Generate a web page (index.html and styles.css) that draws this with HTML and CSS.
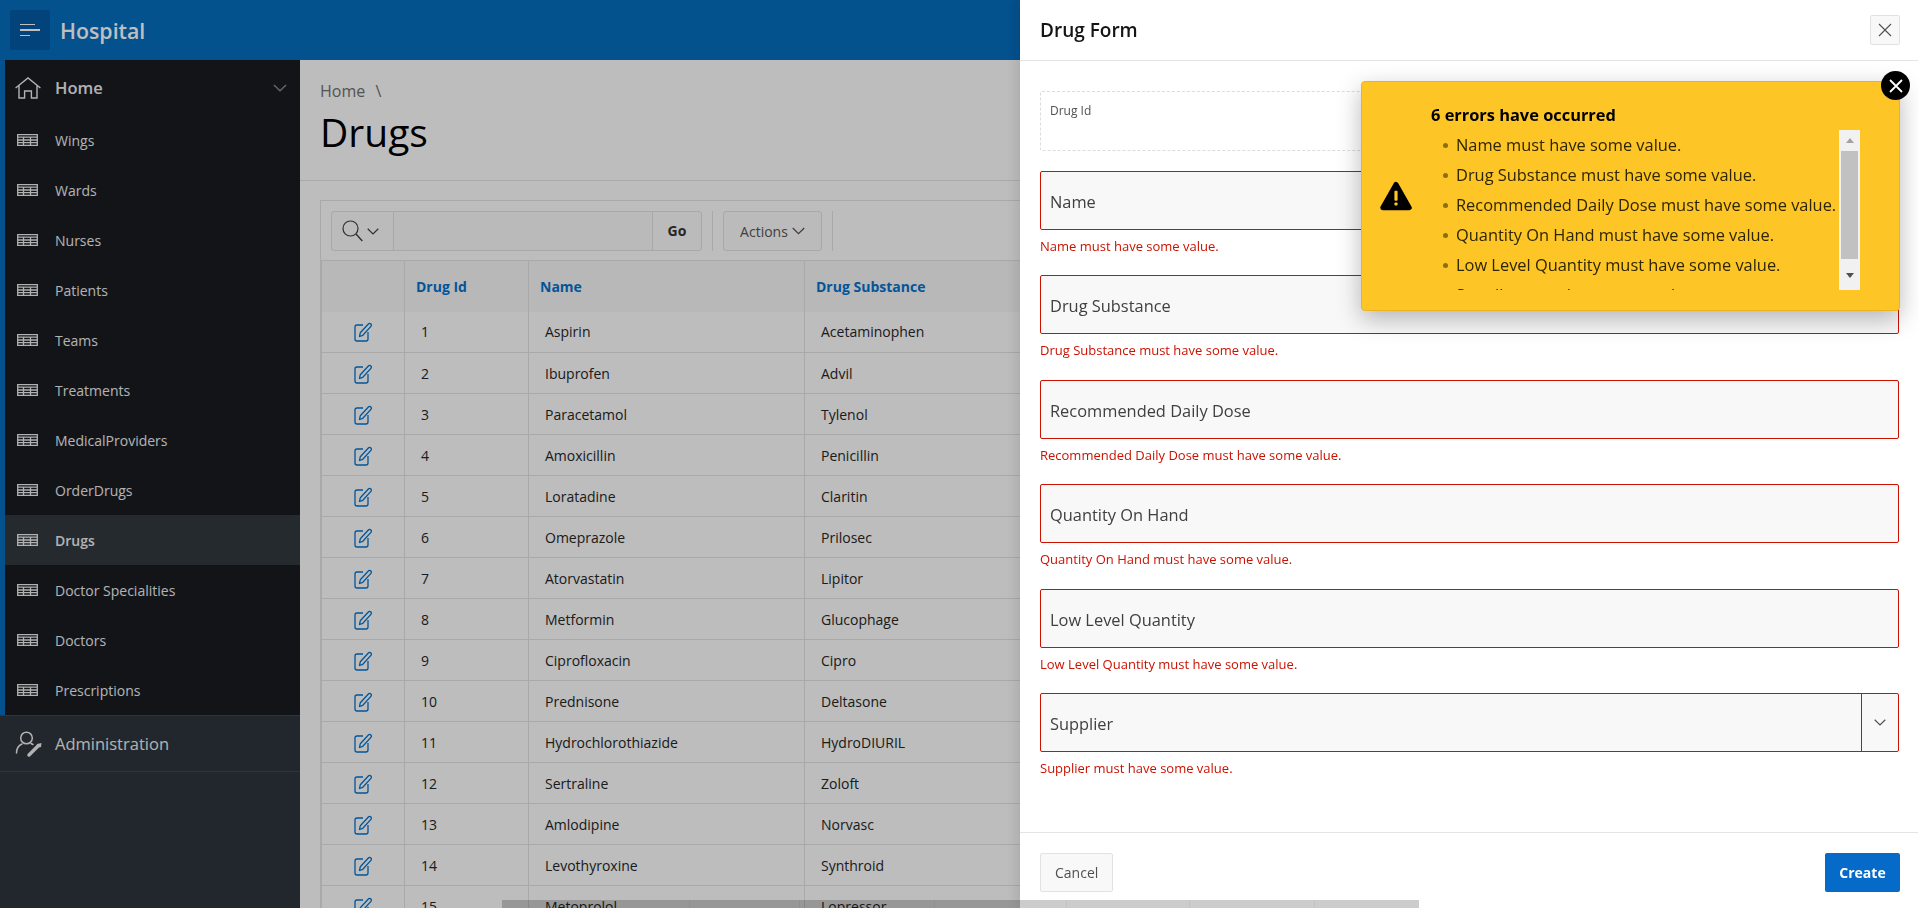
FILE: index.html

```html
<!DOCTYPE html>
<html lang="en">
<head>
    <meta charset="UTF-8">
    <meta name="viewport" content="width=device-width, initial-scale=1.0">
    <link rel="stylesheet" href="styles.css">
    <title>Drugs</title>
</head>
<body>
    <svg class="defs" width="0" height="0">
        <symbol id="i-table" viewBox="0 0 21 12">
            <path d="M.7.7h19.6v10.6H.7zM.7 3.2h19.6M.7 6h19.6M.7 8.7h19.6M6.5 3.2v8.1M13.5 3.2v8.1" fill="none" stroke="currentColor" stroke-width="1.3"/>
        </symbol>
        <symbol id="i-edit" viewBox="0 0 18 20">
            <path d="M9 3H3a2 2 0 0 0-2 2v12a2 2 0 0 0 2 2h9a2 2 0 0 0 2-2v-7" fill="none" stroke="currentColor" stroke-width="1.3"/>
            <path d="M5.5 14.5l.8-3.8L14.4 2a1.7 1.7 0 0 1 2.5 2.4L8.8 13.300z" fill="none" stroke="currentColor" stroke-width="1.3" stroke-linejoin="round"/>
        </symbol>
        <symbol id="i-chevron" viewBox="0 0 12 7">
            <path d="M.7.8 6 6 11.300.8" fill="none" stroke="currentColor" stroke-width="1.2"/>
        </symbol>
    </svg>

    <header class="topbar">
        <button class="menu-btn">
            <span class="menu-line menu-line-a"></span>
            <span class="menu-line menu-line-b"></span>
            <span class="menu-line menu-line-c"></span>
        </button>
        <span class="app-name">Hospital</span>
    </header>

    <div class="layout">
        <nav class="sidebar">
            <div class="nav-group">
                <div class="nav-home">
                    <svg class="nav-bigicon" width="26" height="22" viewBox="0 0 26 22"><path d="M.6 11 13 .9 25.400 11M4 8.500V21h5.600v-7h6.800v7H22V8.500" fill="none" stroke="currentColor" stroke-width="1.400"/></svg>
                    <span class="nav-home-label">Home</span>
                    <svg class="nav-chevron" width="14" height="8"><use href="#i-chevron"/></svg>
                </div>
                <a class="nav-item"><svg class="nav-icon" width="21" height="12"><use href="#i-table"/></svg>Wings</a>
                <a class="nav-item"><svg class="nav-icon" width="21" height="12"><use href="#i-table"/></svg>Wards</a>
                <a class="nav-item"><svg class="nav-icon" width="21" height="12"><use href="#i-table"/></svg>Nurses</a>
                <a class="nav-item"><svg class="nav-icon" width="21" height="12"><use href="#i-table"/></svg>Patients</a>
                <a class="nav-item"><svg class="nav-icon" width="21" height="12"><use href="#i-table"/></svg>Teams</a>
                <a class="nav-item"><svg class="nav-icon" width="21" height="12"><use href="#i-table"/></svg>Treatments</a>
                <a class="nav-item"><svg class="nav-icon" width="21" height="12"><use href="#i-table"/></svg>MedicalProviders</a>
                <a class="nav-item"><svg class="nav-icon" width="21" height="12"><use href="#i-table"/></svg>OrderDrugs</a>
                <a class="nav-item nav-item-active"><svg class="nav-icon" width="21" height="12"><use href="#i-table"/></svg>Drugs</a>
                <a class="nav-item"><svg class="nav-icon" width="21" height="12"><use href="#i-table"/></svg>Doctor Specialities</a>
                <a class="nav-item"><svg class="nav-icon" width="21" height="12"><use href="#i-table"/></svg>Doctors</a>
                <a class="nav-item"><svg class="nav-icon" width="21" height="12"><use href="#i-table"/></svg>Prescriptions</a>
            </div>
            <div class="nav-admin">
                <svg class="nav-bigicon" width="27" height="27" viewBox="0 0 27 27">
                    <circle cx="11.500" cy="8" r="5.800" fill="none" stroke="currentColor" stroke-width="1.500"/>
                    <path d="M1.500 23c0-4.500 2-7.500 5.500-9M16 13.500l2 1" fill="none" stroke="currentColor" stroke-width="1.500" stroke-linecap="round"/>
                    <path d="M14 25l8-8" fill="none" stroke="currentColor" stroke-width="3.400" stroke-linecap="round"/>
                    <path d="M20 18.500l2-4.500 4.500-1-.5 4z" fill="currentColor"/>
                </svg>
                <span class="nav-admin-label">Administration</span>
            </div>
        </nav>

        <main class="content">
            <div class="page-head">
                <div class="crumbs">Home <span class="crumb-sep">\</span></div>
                <h1 class="page-title">Drugs</h1>
            </div>
            <section class="report">
                <div class="toolbar">
                    <div class="search">
                        <div class="search-pick">
                            <svg width="21" height="22" viewBox="0 0 21 22"><circle cx="8.500" cy="8.500" r="7.500" fill="none" stroke="currentColor" stroke-width="1.200"/><path d="M14 14l6.300 7" fill="none" stroke="currentColor" stroke-width="1.400"/></svg>
                            <svg width="12" height="7"><use href="#i-chevron"/></svg>
                        </div>
                        <div class="search-input"></div>
                        <div class="search-go">Go</div>
                    </div>
                    <span class="tool-sep"></span>
                    <div class="actions">Actions <svg width="13" height="8"><use href="#i-chevron"/></svg></div>
                    <span class="tool-sep"></span>
                </div>
                <table class="grid">
                    <colgroup>
                        <col class="col-edit"><col class="col-id"><col class="col-name"><col class="col-sub"><col>
                    </colgroup>
                    <thead>
                        <tr><th></th><th>Drug Id</th><th>Name</th><th>Drug Substance</th><th></th></tr>
                    </thead>
                    <tbody id="rows"></tbody>
                </table>
            </section>
        </main>
    </div>

    <div class="scrim"></div>

    <aside class="drawer">
        <div class="drawer-head">
            <h2 class="drawer-title">Drug Form</h2>
            <button class="drawer-close"><svg width="14" height="14" viewBox="0 0 14 14"><path d="M1 1l12 12M13 1 1 13" stroke="currentColor" stroke-width="1.100"/></svg></button>
        </div>
        <form class="drawer-body">
            <div class="field field-display"><span class="display-label">Drug Id</span></div>
            <div class="field">
                <div class="control"><span class="control-text">Name</span></div>
                <p class="field-error">Name must have some value.</p>
            </div>
            <div class="field">
                <div class="control"><span class="control-text">Drug Substance</span></div>
                <p class="field-error">Drug Substance must have some value.</p>
            </div>
            <div class="field">
                <div class="control"><span class="control-text">Recommended Daily Dose</span></div>
                <p class="field-error">Recommended Daily Dose must have some value.</p>
            </div>
            <div class="field">
                <div class="control"><span class="control-text">Quantity On Hand</span></div>
                <p class="field-error">Quantity On Hand must have some value.</p>
            </div>
            <div class="field">
                <div class="control"><span class="control-text">Low Level Quantity</span></div>
                <p class="field-error">Low Level Quantity must have some value.</p>
            </div>
            <div class="field">
                <div class="control control-select">
                    <span class="control-text">Supplier</span>
                    <span class="select-btn"><svg width="12" height="7"><use href="#i-chevron"/></svg></span>
                </div>
                <p class="field-error">Supplier must have some value.</p>
            </div>
        </form>
        <div class="drawer-foot">
            <button class="btn">Cancel</button>
            <button class="btn btn-hot">Create</button>
        </div>
    </aside>

    <div class="alert">
        <button class="alert-close"><svg width="14" height="14" viewBox="0 0 14 14"><path d="M1 1l12 12M13 1 1 13" stroke="#fff" stroke-width="1.800"/></svg></button>
        <div class="alert-icon">
            <svg width="32" height="30" viewBox="0 0 30 28">
                <path d="M15 3 27.500 25H2.500z" fill="#000" stroke="#000" stroke-width="4.500" stroke-linejoin="round"/>
                <rect x="13.500" y="9" width="3" height="9.500" rx="1" fill="#fec527"/>
                <rect x="13.500" y="20" width="3" height="3" rx="1" fill="#fec527"/>
            </svg>
        </div>
        <div class="alert-main">
            <h3 class="alert-title">6 errors have occurred</h3>
            <div class="alert-scroll">
                <ul class="alert-list">
                    <li>Name must have some value.</li>
                    <li>Drug Substance must have some value.</li>
                    <li>Recommended Daily Dose must have some value.</li>
                    <li>Quantity On Hand must have some value.</li>
                    <li>Low Level Quantity must have some value.</li>
                    <li>Supplier must have some value.</li>
                </ul>
                <div class="fake-bar">
                    <span class="bar-up"></span>
                    <span class="bar-thumb"></span>
                    <span class="bar-down"></span>
                </div>
            </div>
        </div>
    </div>

    <div class="hscroll">
        <span class="hscroll-cell hscroll-a"></span>
        <span class="hscroll-cell hscroll-b"></span>
        <span class="hscroll-cell hscroll-c"></span>
        <span class="hscroll-cell hscroll-d"></span>
        <span class="hscroll-cell hscroll-e"></span>
        <span class="hscroll-cell hscroll-f"></span>
    </div>

    <script>
        const drugs = [
            ["Aspirin", "Acetaminophen"],
            ["Ibuprofen", "Advil"],
            ["Paracetamol", "Tylenol"],
            ["Amoxicillin", "Penicillin"],
            ["Loratadine", "Claritin"],
            ["Omeprazole", "Prilosec"],
            ["Atorvastatin", "Lipitor"],
            ["Metformin", "Glucophage"],
            ["Ciprofloxacin", "Cipro"],
            ["Prednisone", "Deltasone"],
            ["Hydrochlorothiazide", "HydroDIURIL"],
            ["Sertraline", "Zoloft"],
            ["Amlodipine", "Norvasc"],
            ["Levothyroxine", "Synthroid"],
            ["Metoprolol", "Lopressor"]
        ];

        let rowsHTML = "";
        for (let i = 0; i < drugs.length; i++) {
            rowsHTML += `<tr><td class="cell-edit"><svg width="18" height="20"><use href="#i-edit"/></svg></td><td>${i + 1}</td><td>${drugs[i][0]}</td><td>${drugs[i][1]}</td><td></td></tr>`;
        }
        document.getElementById("rows").innerHTML = rowsHTML;
    </script>
</body>
</html>
```

FILE: styles.css

```css
* {
    box-sizing: border-box;
}

body {
    margin: 0;
    height: 908px;
    overflow: hidden;
    font-family: "Open Sans", "Noto Sans", sans-serif;
    font-size: 14px;
    color: #262626;
    background: #fcfcfc;
}

button {
    font-family: inherit;
}

.defs {
    position: absolute;
}

/* top bar */
.topbar {
    display: flex;
    align-items: center;
    height: 60px;
    padding-left: 10px;
    background: #056cbd;
}

.menu-btn {
    display: flex;
    flex-direction: column;
    gap: 4px;
    width: 40px;
    height: 40px;
    padding: 14px 10px;
    border: 0;
    border-radius: 2px;
    background: #045aa6;
}

.menu-line {
    display: block;
    height: 2px;
    background: #fff;
}

.menu-line-a { width: 15px; }
.menu-line-b { width: 20px; }
.menu-line-c { width: 10px; }

.app-name {
    margin-left: 10px;
    font-size: 21.3px;
    font-weight: 600;
    color: #fff;
}

/* side nav */
.layout {
    display: flex;
    height: 848px;
}

.sidebar {
    flex: 0 0 300px;
    background: #2d353b;
    color: #eee;
}

.nav-group {
    border-left: 5px solid #056cbd;
    background: #181b20;
    height: 655px;
}

.nav-home {
    display: flex;
    align-items: center;
    height: 55px;
    padding-left: 10px;
}

.nav-bigicon {
    flex: none;
}

.nav-home-label {
    margin-left: 14px;
    font-size: 16.5px;
    font-weight: 600;
}

.nav-chevron {
    margin-left: auto;
    margin-right: 13px;
    color: #8a8a8a;
}

.nav-item {
    display: flex;
    align-items: center;
    height: 50px;
    padding-left: 12px;
    font-size: 14px;
}

.nav-item-active {
    background: #31383e;
    font-weight: 600;
}

.nav-icon {
    margin-right: 17px;
}

.nav-admin {
    display: flex;
    align-items: center;
    height: 57px;
    padding-left: 15px;
    border-top: 1px solid #3f474e;
    border-bottom: 1px solid #3f474e;
}

.nav-admin-label {
    margin-left: 13px;
    font-size: 16.5px;
}

/* main area */
.content {
    flex: 1;
    min-width: 0;
    overflow: hidden;
}

.page-head {
    height: 121px;
    padding: 19px 20px 0;
    border-bottom: 1px solid #e2e2e2;
}

.crumbs {
    font-size: 16px;
    line-height: 24px;
    color: #707070;
}

.crumb-sep {
    margin-left: 6px;
}

.page-title {
    margin: 5px 0 0;
    font-size: 39px;
    line-height: 48px;
    font-weight: 500;
    color: #000;
}

.report {
    width: 1578px;
    margin: 19px 0 0 20px;
    border: 1px solid #e2e2e2;
    border-bottom: 0;
}

.toolbar {
    display: flex;
    align-items: center;
    gap: 10px;
    height: 59px;
    padding: 1px 10px 0;
}

.search {
    display: flex;
    width: 371px;
    height: 40px;
    border: 1px solid #e0e0e0;
    border-radius: 3px;
    background: #fafafa;
}

.search-pick {
    display: flex;
    align-items: center;
    gap: 4px;
    width: 61px;
    padding-left: 10px;
    color: #404040;
}

.search-input {
    flex: 1;
    border-left: 1px solid #e0e0e0;
    border-right: 1px solid #e0e0e0;
    background: #f8f8f8;
}

.search-go {
    width: 48px;
    text-align: center;
    line-height: 38px;
    font-weight: 700;
    color: #333;
}

.tool-sep {
    width: 1px;
    height: 40px;
    background: #e2e2e2;
}

.actions {
    display: flex;
    align-items: center;
    justify-content: center;
    gap: 4px;
    width: 99px;
    height: 40px;
    border: 1px solid #e0e0e0;
    border-radius: 3px;
    background: #fafafa;
    color: #555;
}

.grid {
    width: 100%;
    table-layout: fixed;
    border-collapse: collapse;
}

.col-edit { width: 83px; }
.col-id { width: 124px; }
.col-name { width: 276px; }
.col-sub { width: 260px; }

.grid th {
    height: 51px;
    padding: 0 11px;
    border: 1px solid #e2e2e2;
    border-bottom: 0;
    background: #f6f6f6;
    text-align: left;
    font-weight: 700;
    color: #0572ce;
}

.grid td {
    height: 41px;
    padding: 0 16px;
    border: 1px solid #e2e2e2;
    border-top: 0;
    color: #262626;
}

.grid .cell-edit {
    padding: 5px 0 0;
    text-align: center;
    color: #0572ce;
}

.scrim {
    position: fixed;
    inset: 0;
    background: rgba(0, 0, 0, .25);
}

/* drawer */
.drawer {
    position: fixed;
    top: 0;
    right: 0;
    bottom: 0;
    display: flex;
    flex-direction: column;
    width: 898px;
    background: #fff;
    box-shadow: -4px 0 12px rgba(0, 0, 0, .1);
}

.drawer-head {
    display: flex;
    align-items: center;
    justify-content: space-between;
    height: 61px;
    padding: 0 18px 0 20px;
    border-bottom: 1px solid #e4e4e4;
}

.drawer-title {
    margin: 0;
    font-size: 19px;
    font-weight: 600;
    color: #161513;
}

.drawer-close {
    display: flex;
    align-items: center;
    justify-content: center;
    width: 30px;
    height: 30px;
    padding: 0;
    border: 1px solid #e2e2e2;
    border-radius: 2px;
    background: #f8f8f8;
    color: #505050;
}

.drawer-body {
    flex: 1;
    padding: 30px 19px 0 20px;
}

.field {
    height: 104.4px;
}

.field-display {
    height: 60px;
    margin-bottom: 20px;
    padding: 8px 9px;
    border: 1px dashed #dcdcdc;
    border-radius: 2px;
}

.display-label {
    font-size: 12px;
    color: #505050;
}

.control {
    display: flex;
    align-items: center;
    height: 59px;
    padding-left: 9px;
    border: 1px solid #cb1100;
    border-radius: 2px;
    background: #f8f8f8;
    font-size: 16.4px;
    color: #404040;
}

.control-text {
    padding-top: 2px;
}

.control-select {
    justify-content: space-between;
    padding-right: 0;
}

.select-btn {
    display: flex;
    align-items: center;
    justify-content: center;
    width: 37px;
    height: 100%;
    border-left: 1px solid #cb1100;
    color: #505050;
}

.field-error {
    margin: 7px 0 0;
    font-size: 13px;
    line-height: 18px;
    color: #cb1100;
}

.drawer-foot {
    display: flex;
    align-items: flex-start;
    justify-content: space-between;
    height: 76px;
    padding: 20px 18px 0 20px;
    border-top: 1px solid #e4e4e4;
}

.btn {
    height: 39px;
    padding: 0 14px;
    border: 1px solid #e2e2e2;
    border-radius: 2px;
    background: #f8f8f8;
    font-size: 14px;
    color: #505050;
}

.btn-hot {
    width: 75px;
    padding: 0;
    border: 0;
    background: #056ac8;
    font-weight: 700;
    color: #fff;
}

/* error notification */
.alert {
    position: fixed;
    top: 81px;
    left: 1361px;
    display: flex;
    width: 539px;
    height: 230px;
    border: 1px solid #e8b420;
    border-radius: 4px;
    background: #fec527;
    box-shadow: 0 8px 24px rgba(0, 0, 0, .28);
}

.alert-close {
    position: absolute;
    top: -11px;
    right: -11px;
    display: flex;
    align-items: center;
    justify-content: center;
    width: 29px;
    height: 29px;
    padding: 0;
    border: 0;
    border-radius: 50%;
    background: #000;
}

.alert-icon {
    display: flex;
    align-items: center;
    flex: 0 0 69px;
    padding-left: 18px;
}

.alert-main {
    flex: 1;
    padding-top: 21px;
}

.alert-title {
    margin: 0;
    font-size: 16.4px;
    line-height: 24px;
    font-weight: 700;
    color: #000;
}

.alert-scroll {
    display: flex;
    width: 429px;
    height: 160px;
    margin-top: 3px;
    overflow: hidden;
}

.alert-list {
    flex: 1;
    min-width: 0;
    height: 160px;
    margin: 0;
    padding: 0 0 0 25px;
    list-style: none;
    white-space: nowrap;
    overflow: hidden;
}

.alert-list li {
    position: relative;
    height: 30px;
    font-size: 16.4px;
    line-height: 30px;
    color: #2e2600;
}

.alert-list li::before {
    content: "";
    position: absolute;
    left: -13px;
    top: 13px;
    width: 5px;
    height: 5px;
    border-radius: 50%;
    background: #8a6f14;
}

.fake-bar {
    display: flex;
    flex-direction: column;
    align-items: center;
    flex: 0 0 21px;
    height: 160px;
    padding: 8px 2px 0;
    background: #f1f1f1;
}

.bar-up {
    width: 0;
    height: 0;
    border: 4.500px solid transparent;
    border-top: 0;
    border-bottom: 5px solid #a3a3a3;
}

.bar-thumb {
    width: 17px;
    height: 108px;
    margin-top: 8px;
    background: #c1c1c1;
}

.bar-down {
    width: 0;
    height: 0;
    margin-top: 14px;
    border: 4.500px solid transparent;
    border-bottom: 0;
    border-top: 5px solid #505050;
}

/* stray table scrollbar lying over everything at the foot of the page */
.hscroll {
    position: fixed;
    left: 502px;
    bottom: 0;
    display: flex;
    width: 917px;
    height: 8px;
    background: rgba(0, 0, 0, .2);
}

.hscroll-cell {
    display: block;
    height: 100%;
    border-right: 1px solid rgba(0, 0, 0, .05);
}

.hscroll-a { width: 188px; }
.hscroll-b { width: 110px; }
.hscroll-c { width: 135px; }
.hscroll-d { width: 132px; }
.hscroll-e { width: 123px; }
.hscroll-f { width: 125px; }
```
